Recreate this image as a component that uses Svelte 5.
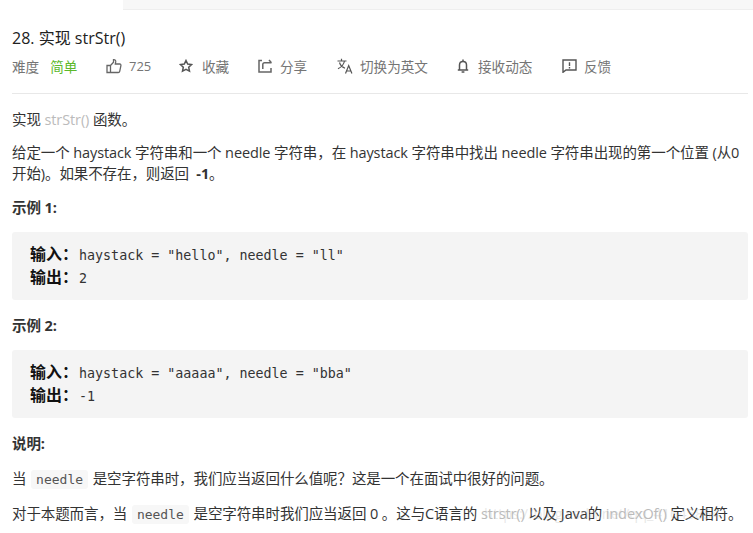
<script lang="ts">
    const examples = [
        { title: '示例 1:', input: 'haystack = "hello", needle = "ll"', output: '2' },
        { title: '示例 2:', input: 'haystack = "aaaaa", needle = "bba"', output: '-1' },
    ];
</script>

<div class="page">
    <div class="topbar"></div>

    <div class="content">
        <h1>28. 实现 strStr()</h1>

        <div class="meta">
            <span class="item diff">难度<b>简单</b></span>
            <span class="item like">
                <svg width="16" height="16" viewBox="0 0 16 16" fill="none" stroke="#666" stroke-width="1.3"><path d="M1 7.500h3.500v7H1zM4.500 7.500l3-3.200V1.600c1.500-.3 2.400.8 2.200 2.300L9.300 6h4.400c1 0 1.400.8 1.200 1.600l-1.200 5.700c-.2.8-.7 1.200-1.400 1.200H4.500"/></svg>
                725
            </span>
            <span class="item star">
                <svg width="14" height="14" viewBox="0 0 14 14" fill="none" stroke="#555" stroke-width="1.5"><path d="M7 1.500l1.700 3.600 3.900.5-2.900 2.700.8 3.900L7 10.400l-3.500 1.800.8-3.900-2.900-2.700 3.900-.5z"/></svg>
                收藏
            </span>
            <span class="item share">
                <svg width="14" height="14" viewBox="0 0 14 14" fill="none" stroke="#666" stroke-width="1.500"><path d="M4 1.500H1v11.500h12V9"/><path d="M4.800 10V5.500c0-1 .7-1.700 1.700-1.700H13.500M11 1l2.500 2.800"/></svg>
                分享
            </span>
            <span class="item lang">
                <svg width="16" height="16" viewBox="0 0 16 16" fill="none" stroke="#555" stroke-width="1.200"><path d="M.5 3h9M4.500 .8V3M7.500 3c-.6 3.200-3 6-6.500 7.800M2.500 4.500c.8 2.700 3 4.700 5.500 5.700M8.500 15.500l3.200-8 3.200 8M9.600 13h4.200"/></svg>
                切换为英文
            </span>
            <span class="item bell">
                <svg width="12" height="14" viewBox="0 0 12 14" fill="none" stroke="#555" stroke-width="1.500"><path d="M.8 11h10.400M2.500 11V6c0-2 1.500-3.600 3.500-3.600S9.500 4 9.500 6v5"/><path d="M4.600 13h2.800M6 .6v1.600"/></svg>
                接收动态
            </span>
            <span class="item report">
                <svg width="15" height="14" viewBox="0 0 15 14" fill="none" stroke="#555" stroke-width="1.400"><path d="M1 1h13v10H4l-3 2.300z"/><path d="M7.500 3.200v3.800M7.500 8v1.400"/></svg>
                反馈
            </span>
        </div>

        <div class="desc">
            <p class="lead">实现 <a href="#strstr">strStr()</a> 函数。</p>
            <p class="intro">给定一个 haystack 字符串和一个 needle 字符串，在 haystack 字符串中找出 needle 字符串出现的第一个位置 (从0开始)。如果不存在，则返回&nbsp; <strong>-1</strong>。</p>

            {#each examples as ex}
                <p><strong>{ex.title}</strong></p>
                <pre><strong>输入：</strong>{ex.input}
<strong>输出：</strong>{ex.output}</pre>
            {/each}

            <p><strong>说明:</strong></p>
            <p class="note">当&nbsp;<code>needle</code>&nbsp;是空字符串时，我们应当返回什么值呢？这是一个在面试中很好的问题。</p>
            <p class="note last">对于本题而言，当&nbsp;<code>needle</code>&nbsp;是空字符串时我们应当返回 0 。这与C语言的&nbsp;<a href="#strstr">strstr()</a>&nbsp;以及 Java的&nbsp;<a href="#indexof">indexOf()</a>&nbsp;定义相符。</p>
        </div>
    </div>

    <div class="watermark">https://blog.csdn.net/qq_41645854</div>
</div>

<style>
    :global(body) { margin: 0; background: #fff; }

    .page {
        position: relative;
        width: 753px;
        height: 533px;
        overflow: hidden;
        font-family: "Open Sans", "Noto Sans CJK SC", sans-serif;
        color: #333;
    }

    .topbar {
        margin-left: 123px;
        height: 9px;
        background: #f7f7f7;
        border-bottom: 1px solid #eee;
    }

    .content { padding: 0 5px 0 12px; }

    h1 {
        margin: 16px 0 0;
        font-size: 16px;
        font-weight: 400;
        line-height: 24px;
        color: #212121;
    }

    .meta {
        display: flex;
        align-items: center;
        height: 22px;
        margin-top: 5px;
        padding-bottom: 16px;
        border-bottom: 1px solid #e8e8e8;
        font-size: 13.600px;
        color: #757575;
    }
    .item { display: flex; align-items: center; gap: 7px; white-space: nowrap; }
    .diff { width: 94px; gap: 11px; }
    .diff b { font-weight: 400; color: #5cb82a; }
    .like { width: 73px; font-size: 13px; }
    .star { width: 79px; gap: 9px; }
    .share { width: 79px; gap: 8px; }
    .lang { width: 120px; }
    .bell { width: 105px; gap: 9px; }

    .desc { font-size: 14.500px; line-height: 21px; letter-spacing: -0.1px; }
    .desc p { margin: 13px 0 0; }
    .desc p.lead { margin-top: 15px; }
    .desc p.intro { margin-top: 12px; }
    .desc a { color: #bbb; text-decoration: none; }
    .desc strong { font-weight: 700; }
    .desc p.note { margin-top: 14px; }
    .desc p.note.last { margin-top: 13px; }
    .desc pre + p { margin-top: 15px; }

    pre {
        margin: 14px 0 0;
        padding: 12px 18px;
        height: 44px;
        line-height: 23px;
        letter-spacing: 0;
        background: #f4f4f4;
        border-radius: 3px;
        font-family: "DejaVu Sans Mono", "Noto Sans CJK SC", monospace;
        font-size: 13.330px;
        color: #333;
    }
    pre strong {
        margin-right: 1px;
        color: #111;
        font-size: 16px;
        line-height: 1;
        font-family: "Noto Sans CJK SC", sans-serif;
    }

    code {
        margin: 0 1px;
        padding: 2px 5px;
        background: #f7f7f7;
        border-radius: 3px;
        font-family: "DejaVu Sans Mono", monospace;
        font-size: 13px;
        letter-spacing: 0;
        color: #555;
    }

    .watermark {
        position: absolute;
        left: 484px;
        top: 504px;
        font-size: 14.500px;
        line-height: 20px;
        white-space: nowrap;
        color: rgba(190, 190, 190, 0.35);
    }
</style>
